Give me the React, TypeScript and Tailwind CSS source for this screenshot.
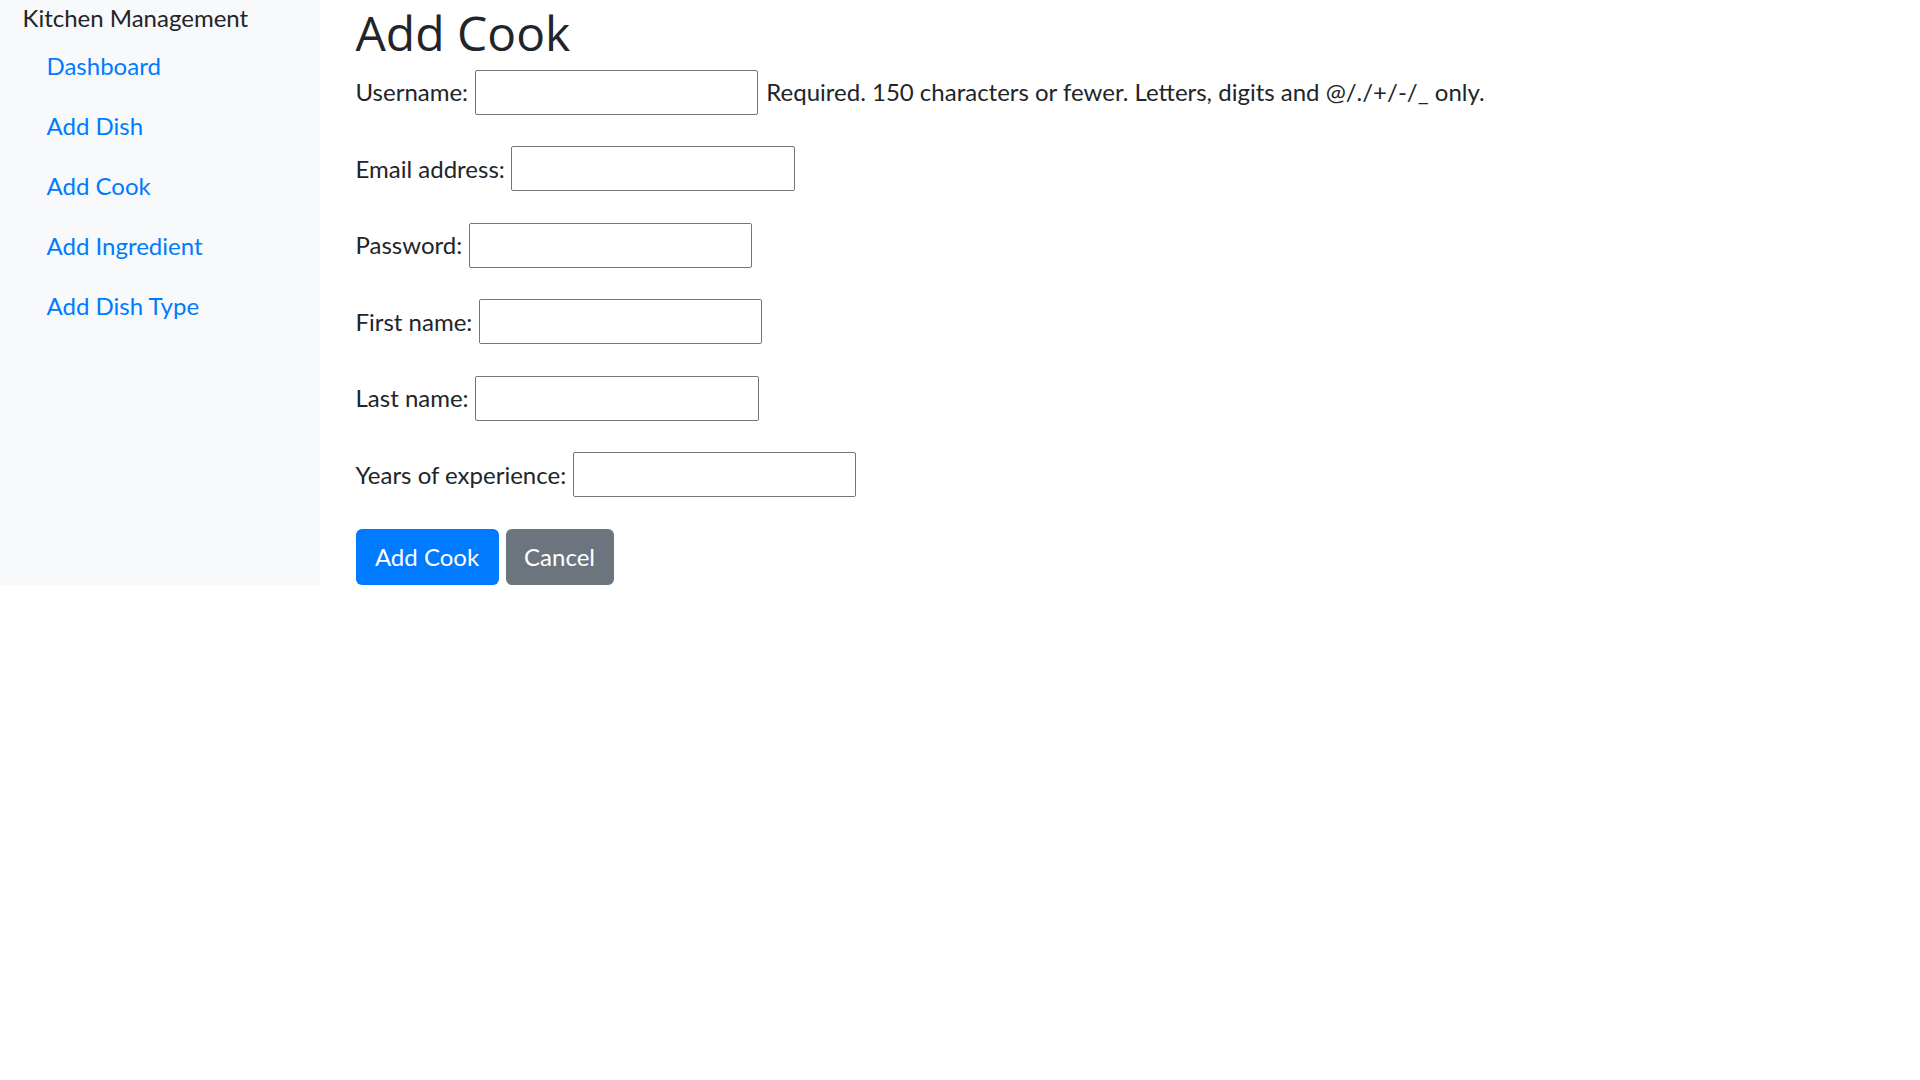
import React from "react";

const navLinks = ["Dashboard", "Add Dish", "Add Cook", "Add Ingredient", "Add Dish Type"];

const fields = [
  { label: "Username:", type: "text", help: "Required. 150 characters or fewer. Letters, digits and @/./+/-/_ only." },
  { label: "Email address:", type: "email" },
  { label: "Password:", type: "password" },
  { label: "First name:", type: "text" },
  { label: "Last name:", type: "text" },
  { label: "Years of experience:", type: "number" },
];

function Sidebar() {
  return (
    <aside className="w-[320px] shrink-0 bg-[#f8f9fa] px-[22.5px]">
      <div className="text-[24px] leading-[36px] text-[#212529]">Kitchen Management</div>
      <ul className="flex flex-col">
        {navLinks.map((link) => (
          <li key={link}>
            <a href="#" className="block px-[24px] py-[12px] text-[24px] leading-[36px] text-[#007bff] hover:underline">
              {link}
            </a>
          </li>
        ))}
      </ul>
    </aside>
  );
}

export default function App() {
  return (
    <div className="min-h-screen bg-white text-[#212529] [font-family:'Lato','Open_Sans',sans-serif]">
      <div className="flex items-stretch">
        <Sidebar />
        <main className="flex-1 pl-[35.5px]">
          <h1 className="mb-[4.6px] text-[48px] font-medium leading-[65.4px] [font-family:'Open_Sans',sans-serif]">
            Add Cook
          </h1>
          <form className="flex flex-col gap-[31.8px]" onSubmit={(e) => e.preventDefault()}>
            {fields.map((f) => (
              <div key={f.label} className="flex h-[44.7px] items-center gap-[6.6px] text-[24px] leading-[36px]">
                <label>{f.label}</label>
                <input
                  type={f.type === "number" ? "text" : f.type}
                  className="h-[44.7px] w-[283.5px] rounded-[2px] border border-[#767676] bg-white px-[2px]"
                />
                {f.help && <span className="ml-[1.5px]">{f.help}</span>}
              </div>
            ))}
            <div className="flex gap-[7px]">
              <button type="submit" className="h-[56px] w-[143px] rounded-[6px] bg-[#007bff] text-[24px] leading-[36px] text-white">
                Add Cook
              </button>
              <button type="button" className="h-[56px] w-[108px] rounded-[6px] bg-[#6c757d] text-[24px] leading-[36px] text-white">
                Cancel
              </button>
            </div>
          </form>
        </main>
      </div>
    </div>
  );
}
